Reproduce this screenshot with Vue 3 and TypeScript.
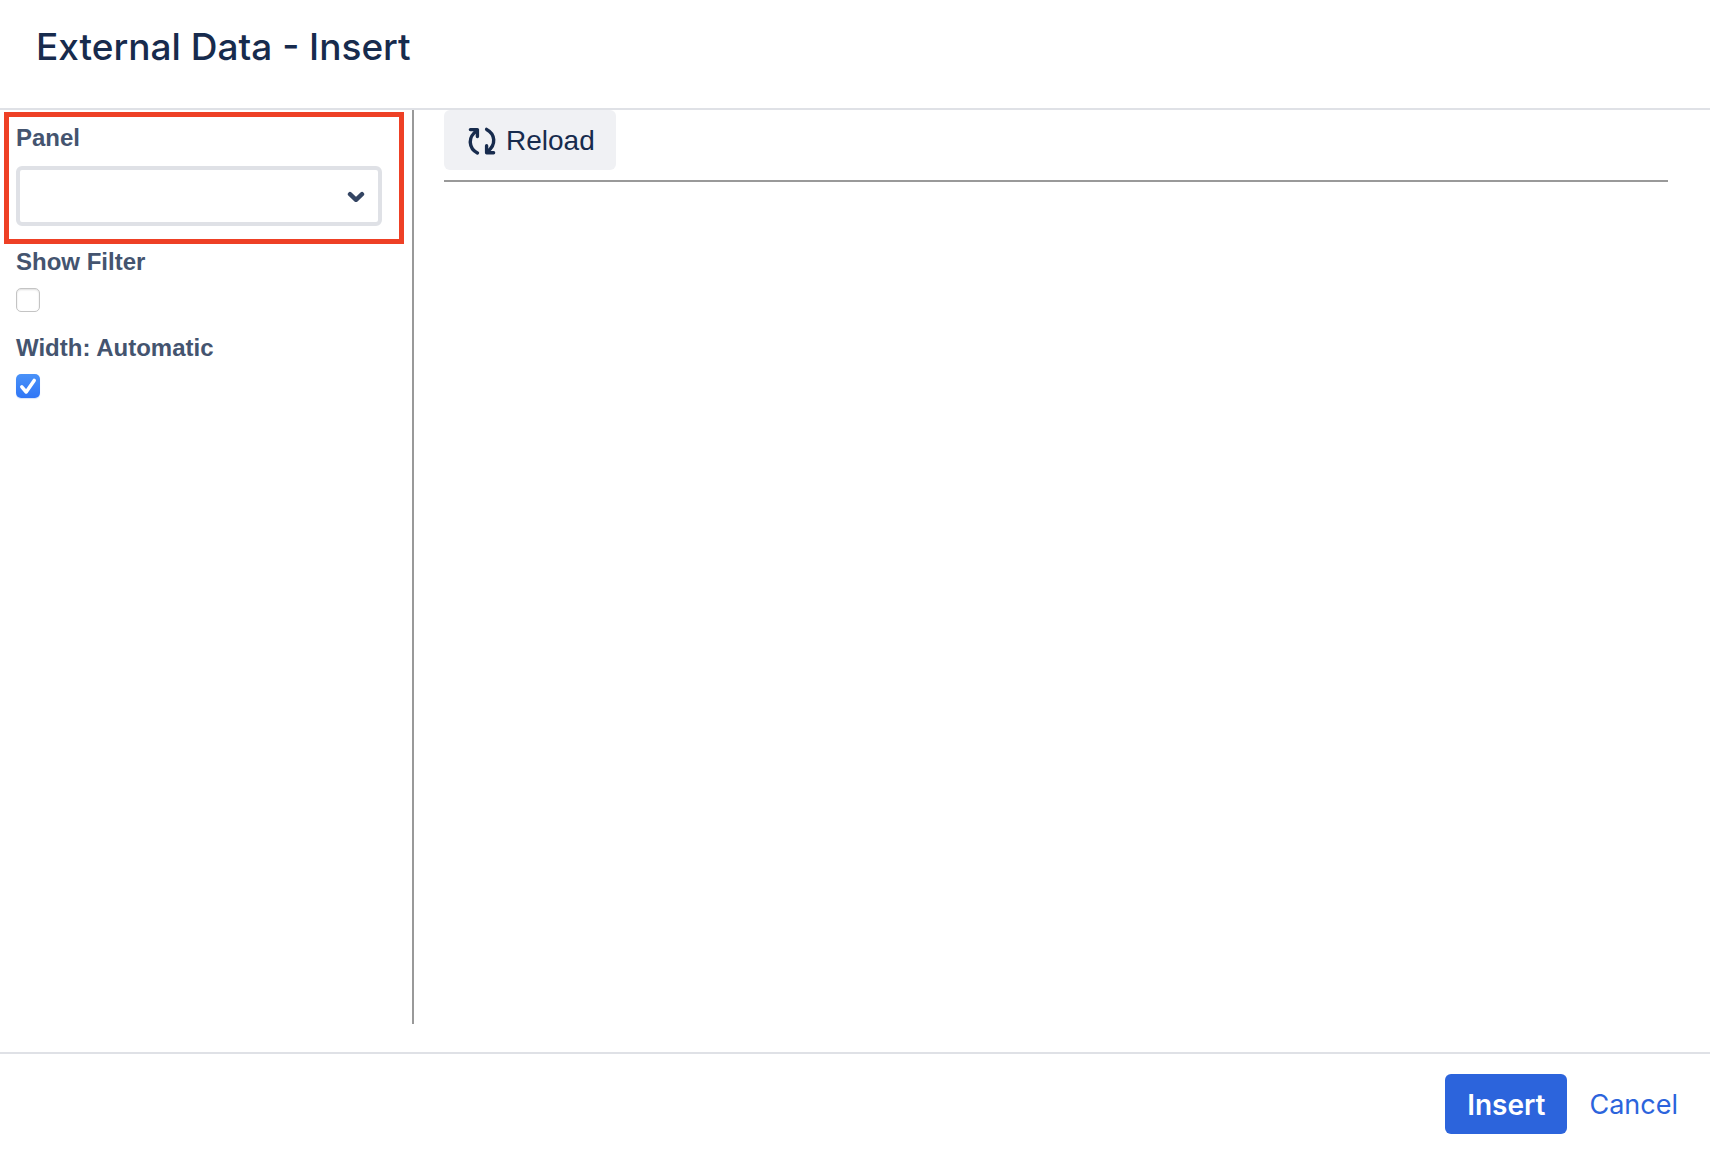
<script setup lang="ts">
import { ref } from 'vue'

const panel = ref<string>('')
const showFilter = ref<boolean>(false)
const autoWidth = ref<boolean>(true)
</script>

<template>
  <div class="dialog">
    <header class="dialog-header">
      <h1>External Data - Insert</h1>
    </header>

    <div class="dialog-body">
      <form class="sidebar" @submit.prevent>
        <div class="field highlighted">
          <label for="panel">Panel</label>
          <div class="select-wrap">
            <select id="panel" v-model="panel">
              <option value=""></option>
            </select>
            <svg class="chevron" viewBox="0 0 18 12" width="18" height="12" aria-hidden="true">
              <path d="M3 3.2 L9 8.8 L15 3.2" fill="none" stroke="#344563" stroke-width="4.4" stroke-linecap="round" stroke-linejoin="round" />
            </svg>
          </div>
        </div>
        <div class="field option">
          <label for="show-filter">Show Filter</label>
          <span class="check">
            <input id="show-filter" v-model="showFilter" type="checkbox" />
          </span>
        </div>
        <div class="field option">
          <label for="auto-width">Width: Automatic</label>
          <span class="check">
            <input id="auto-width" v-model="autoWidth" type="checkbox" />
            <svg v-if="autoWidth" class="tick" viewBox="0 0 24 24" width="24" height="24" aria-hidden="true">
              <path d="M5.8 12.8 L10.2 18 L18.2 6.4" fill="none" stroke="#fff" stroke-width="3.5" stroke-linecap="round" stroke-linejoin="round" />
            </svg>
          </span>
        </div>
      </form>

      <main class="preview">
        <div class="toolbar">
          <button type="button" class="reload">
            <svg viewBox="0 0 28 28" width="28" height="28" aria-hidden="true">
              <g fill="none" stroke="#172b4d" stroke-width="3.4" stroke-linecap="round" stroke-linejoin="round">
                <path d="M9.4 26 C0.6 21.4 -0.4 10.4 8.4 4" />
                <path d="M2.4 2.6 H9.4 V9.6" />
                <path d="M18.6 2.4 C27.4 7 28.4 18 19.6 24.4" />
                <path d="M25.6 25.8 H18.6 V18.8" />
              </g>
              <path d="M4 2.4 H9.8 V9 Z M24 26 H18.2 V19.4 Z" fill="#172b4d" />
            </svg>
            Reload
          </button>
        </div>
      </main>
    </div>

    <footer class="dialog-footer">
      <button type="button" class="insert">Insert</button>
      <button type="button" class="cancel">Cancel</button>
    </footer>
  </div>
</template>

<style>
body {
  margin: 0;
  background: #fff;
}
</style>

<style scoped>
.dialog {
  display: flex;
  flex-direction: column;
  min-height: 100vh;
  color: #172b4d;
  font-family: "Liberation Sans", Arial, sans-serif;
}

.dialog,
.dialog * {
  box-sizing: border-box;
}

.dialog-header {
  padding: 23px 36px 37px;
  border-bottom: 2px solid #dfe1e6;
}

h1 {
  margin: 0;
  font: 500 37px/48px Inter, sans-serif;
}

.dialog-body {
  display: flex;
  flex: 1;
}

.sidebar {
  flex: none;
  width: 414px;
  margin-bottom: 28px;
  padding-top: 2px;
  border-right: 2px solid #999;
}

.field label {
  display: block;
  color: #44546f;
  font-size: 24px;
  font-weight: 700;
  line-height: 28px;
}

.highlighted {
  margin: 0 8px 4px 4px;
  padding: 7px 17px 13px 7px;
  border: 5px solid #ee4025;
}

.select-wrap {
  position: relative;
  margin-top: 14px;
}

select {
  display: block;
  width: 100%;
  height: 60px;
  padding: 0 48px 0 12px;
  appearance: none;
  background: #fff;
  border: 4px solid #dfe1e6;
  border-radius: 6px;
  color: #172b4d;
  font: inherit;
}

.chevron {
  position: absolute;
  top: 25px;
  right: 17px;
  pointer-events: none;
}

.option {
  padding-left: 16px;
  margin-bottom: 22px;
}

.check {
  position: relative;
  display: block;
  width: 24px;
  height: 24px;
  margin-top: 12px;
}

input {
  display: block;
  width: 24px;
  height: 24px;
  margin: 0;
  appearance: none;
  background: #fff;
  border: 1px solid #c4c4c4;
  border-radius: 5px;
  box-shadow: inset 0 1px 2px #dedede;
}

input:checked {
  border: 0;
  background: linear-gradient(#4a92f8, #3076f6);
  box-shadow: 0 1px 1px #d5e2fb;
}

.tick {
  position: absolute;
  inset: 0;
  pointer-events: none;
}

.preview {
  flex: 1;
  padding: 0 42px 0 30px;
}

.toolbar {
  padding-bottom: 10px;
  border-bottom: 2px solid #999;
}

button {
  height: 60px;
  border: 0;
  border-radius: 6px;
}

.reload {
  display: flex;
  align-items: center;
  gap: 10px;
  padding: 1px 21px 0 24px;
  background: #f0f1f4;
  color: #172b4d;
  font: 400 28px/32px "Liberation Sans", Arial, sans-serif;
}

.dialog-footer {
  display: flex;
  justify-content: flex-end;
  padding: 20px 32px 16px;
  border-top: 2px solid #dfe1e6;
}

.insert {
  padding: 1px 22px 0;
  background: #2c64dc;
  color: #fff;
  font: 600 28px/32px Inter, sans-serif;
}

.cancel {
  margin-left: 22px;
  padding: 1px 0 0;
  background: none;
  color: #2c64dc;
  font: 400 27px/32px Inter, sans-serif;
}
</style>
